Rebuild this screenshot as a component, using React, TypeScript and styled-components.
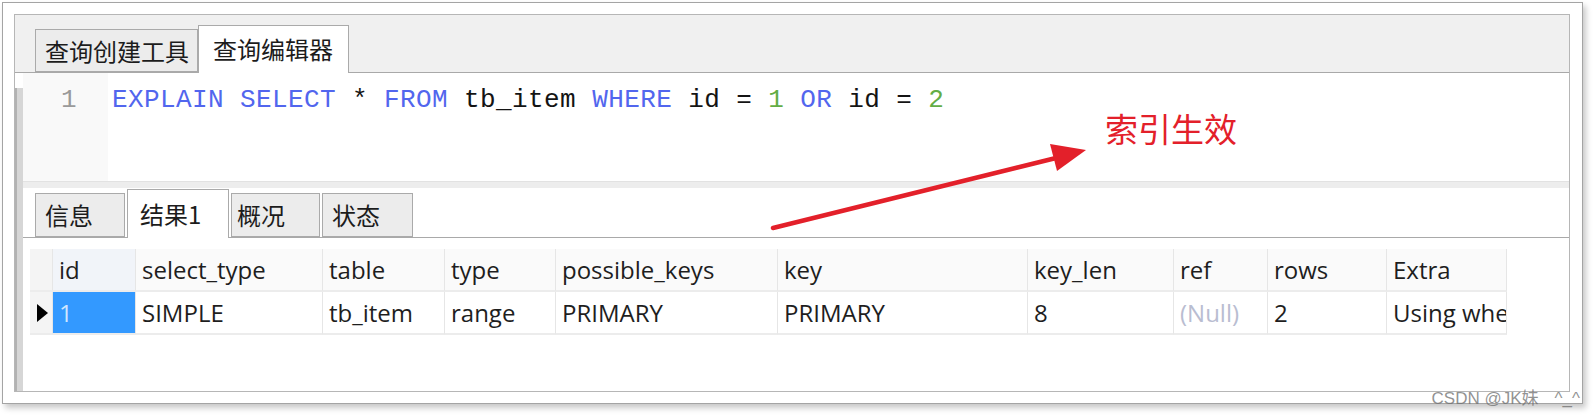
import React from "react";
import styled, { createGlobalStyle } from "styled-components";

const GlobalStyle = createGlobalStyle`
    html, body {
        margin: 0;
        padding: 0;
        background: #ffffff;
    }
    body {
        font-family: "Open Sans", "Noto Sans CJK SC", sans-serif;
    }
`;

const columns = [
    { key: "id", width: 83 },
    { key: "select_type", width: 187 },
    { key: "table", width: 122 },
    { key: "type", width: 111 },
    { key: "possible_keys", width: 222 },
    { key: "key", width: 250 },
    { key: "key_len", width: 146 },
    { key: "ref", width: 94 },
    { key: "rows", width: 119 },
    { key: "Extra", width: 120 },
];

const row: Record<string, string | null> = {
    id: "1",
    select_type: "SIMPLE",
    table: "tb_item",
    type: "range",
    possible_keys: "PRIMARY",
    key: "PRIMARY",
    key_len: "8",
    ref: null,
    rows: "2",
    Extra: "Using where",
};

const editorTabs = [
    { label: "查询创建工具", width: 163, pad: 9 },
    { label: "查询编辑器", width: 151, pad: 14 },
];

const resultTabs = [
    { label: "信息", width: 90, pad: 9 },
    { label: "结果1", width: 102, pad: 12 },
    { label: "概况", width: 89, pad: 5 },
    { label: "状态", width: 91, pad: 9 },
];

export default function App() {
    return (
        <>
            <GlobalStyle />
            <Page>
                <Frame>
                    <Panel>
                        <TopTabs>
                            {editorTabs.map((t, i) => (
                                <Tab key={t.label} $active={i == 1} $width={t.width} $pad={t.pad} $tall={48} $short={43}>
                                    {t.label}
                                </Tab>
                            ))}
                        </TopTabs>
                        <BodyRow>
                            <Rail />
                            <MainColumn>
                                <Editor>
                                    <Gutter>1</Gutter>
                                    <Code>
                                        <Kw>EXPLAIN</Kw> <Kw>SELECT</Kw> * <Kw>FROM</Kw> tb_item <Kw>WHERE</Kw> id ={" "}
                                        <Num>1</Num> <Kw>OR</Kw> id = <Num>2</Num>
                                    </Code>
                                </Editor>
                                <Splitter />
                                <ResultTabs>
                                    {resultTabs.map((t, i) => (
                                        <Tab key={t.label} $active={i == 1} $width={t.width} $pad={t.pad} $tall={49} $short={44}>
                                            {t.label}
                                        </Tab>
                                    ))}
                                </ResultTabs>
                                <Grid>
                                    <Cell $header $indicator />
                                    {columns.map((c) => (
                                        <Cell key={c.key} $header $first={c.key == "id"}>
                                            {c.key}
                                        </Cell>
                                    ))}
                                    <Cell $indicator>
                                        <Pointer />
                                    </Cell>
                                    {columns.map((c) =>
                                        c.key == "id" ? (
                                            <Cell key={c.key} $selected>
                                                {row[c.key]}
                                            </Cell>
                                        ) : (
                                            <Cell key={c.key} $muted={row[c.key] === null}>
                                                {row[c.key] ?? "(Null)"}
                                            </Cell>
                                        )
                                    )}
                                </Grid>
                            </MainColumn>
                        </BodyRow>
                    </Panel>
                </Frame>
                <Annotation>
                    <svg width="1594" height="418" viewBox="0 0 1594 418">
                        <line x1="773" y1="228" x2="1056" y2="158" stroke="#e3202a" strokeWidth="4.5" strokeLinecap="round" />
                        <polygon points="1086,150 1050,144 1057,171" fill="#e3202a" />
                    </svg>
                    <Note>索引生效</Note>
                </Annotation>
                <Watermark>
                    <span>CSDN @JK妹</span>
                    <span>^_^</span>
                </Watermark>
            </Page>
        </>
    );
}

const Page = styled.div`
    position: relative;
    width: 1594px;
    height: 418px;
    overflow: hidden;
`;

const Frame = styled.div`
    box-sizing: border-box;
    margin: 2px 0 0 2px;
    width: 1581px;
    height: 402px;
    border: 1px solid #a4a4a4;
    background: #ffffff;
    box-shadow: 3px 4px 6px rgba(0, 0, 0, 0.22);
    padding: 11px 12px 11px 11px;
    display: flex;
`;

const Panel = styled.div`
    flex: 1;
    display: flex;
    flex-direction: column;
    border: 1px solid #b6b6b6;
    background: #ffffff;
`;

const TopTabs = styled.div`
    box-sizing: border-box;
    height: 58px;
    display: flex;
    align-items: flex-end;
    padding-left: 20px;
    background: #f0f0f0;
    border-bottom: 1px solid #a9a9a9;
`;

const Tab = styled.div<{ $active?: boolean; $width: number; $pad: number; $tall: number; $short: number }>`
    box-sizing: border-box;
    width: ${(p) => p.$width}px;
    height: ${(p) => (p.$active ? p.$tall : p.$short)}px;
    margin-bottom: ${(p) => (p.$active ? -1 : 0)}px;
    padding-left: ${(p) => p.$pad}px;
    padding-bottom: ${(p) => (p.$active ? 2 : 1)}px;
    display: flex;
    align-items: center;
    border: 1px solid #aaaaaa;
    border-bottom: ${(p) => (p.$active ? "none" : "1px solid #aaaaaa")};
    background: ${(p) => (p.$active ? "#ffffff" : "#ececec")};
    color: #1c1c1c;
    font-family: "Noto Sans CJK SC", "Open Sans", sans-serif;
    font-size: 24px;
    white-space: nowrap;
    position: relative;
`;

const BodyRow = styled.div`
    flex: 1;
    display: flex;
`;

const Rail = styled.div`
    width: 6px;
    margin-top: 15px;
    background: #d6d6d6;
    border-left: 2px solid #b2b2b2;
`;

const MainColumn = styled.div`
    flex: 1;
    display: flex;
    flex-direction: column;
`;

const Editor = styled.div`
    height: 108px;
    display: flex;
    font-family: "Liberation Mono", "Courier New", monospace;
    font-size: 26px;
    letter-spacing: 0.4px;
    line-height: 30px;
`;

const Gutter = styled.div`
    box-sizing: border-box;
    width: 85px;
    padding: 12px 31px 0 0;
    text-align: right;
    color: #9a9a9a;
    background: #f9f9f9;
`;

const Code = styled.div`
    padding: 12px 0 0 4px;
    color: #141414;
    white-space: pre;
`;

const Kw = styled.span`
    color: #5266ee;
`;

const Num = styled.span`
    color: #63ad45;
`;

const Splitter = styled.div`
    height: 6px;
    background: #ededed;
    border-top: 1px solid #e2e2e2;
`;

const ResultTabs = styled.div`
    box-sizing: border-box;
    height: 50px;
    display: flex;
    align-items: flex-end;
    gap: 2px;
    padding-left: 12px;
    background: #ffffff;
    border-bottom: 1px solid #a9a9a9;
`;

const Grid = styled.div`
    margin: 11px 0 0 7px;
    display: grid;
    grid-template-columns: 23px ${columns.map((c) => `${c.width}px`).join(" ")};
    grid-auto-rows: 43px;
    font-family: "Open Sans", "Noto Sans", sans-serif;
    font-size: 24px;
    color: #1e1e1e;
`;

const Cell = styled.div<{ $header?: boolean; $indicator?: boolean; $selected?: boolean; $muted?: boolean; $first?: boolean }>`
    box-sizing: border-box;
    display: flex;
    align-items: center;
    padding-left: ${(p) => (p.$indicator ? 0 : 6)}px;
    justify-content: ${(p) => (p.$indicator ? "center" : "flex-start")};
    overflow: hidden;
    white-space: nowrap;
    border-right: 1px solid #e6e6e6;
    border-bottom: 2px solid #ececec;
    background: ${(p) =>
        p.$selected ? "#3399ff" : p.$indicator ? "#f4f4f4" : p.$first ? "#f1f4f9" : p.$header ? "#fafafa" : "#ffffff"};
    color: ${(p) => (p.$selected ? "#cfe6ff" : p.$muted ? "#b9bdd1" : "#1e1e1e")};
`;

const Pointer = styled.div`
    width: 0;
    height: 0;
    border-top: 9px solid transparent;
    border-bottom: 9px solid transparent;
    border-left: 11px solid #000000;
    margin-left: 2px;
`;

const Annotation = styled.div`
    position: absolute;
    inset: 0;
    pointer-events: none;

    & svg {
        position: absolute;
        left: 0;
        top: 0;
    }
`;

const Note = styled.div`
    position: absolute;
    left: 1105px;
    top: 108px;
    font-family: "Noto Sans CJK SC", sans-serif;
    font-size: 33px;
    line-height: 40px;
    color: #e3202a;
`;

const Watermark = styled.div`
    position: absolute;
    right: 14px;
    top: 389px;
    display: flex;
    gap: 16px;
    font-family: "Liberation Sans", "Noto Sans CJK SC", sans-serif;
    font-size: 17px;
    line-height: 20px;
    color: rgba(110, 110, 110, 0.75);
    white-space: nowrap;
`;
